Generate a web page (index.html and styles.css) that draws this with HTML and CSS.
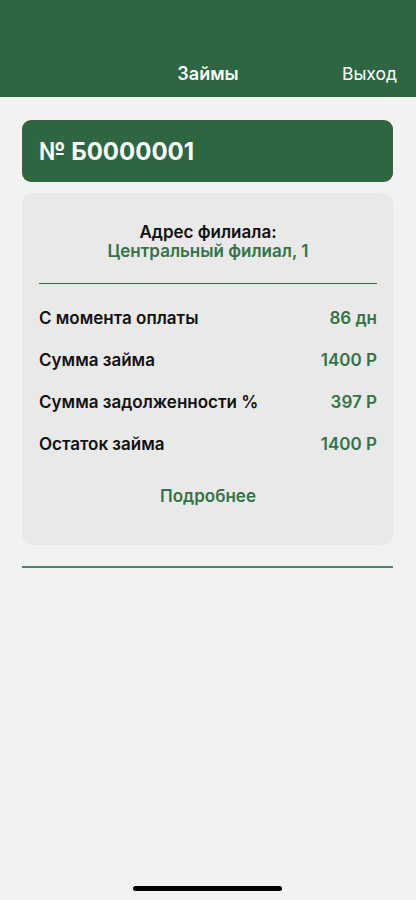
FILE: index.html
```html
<!DOCTYPE html>
<html lang="ru">
<head>
    <meta charset="UTF-8">
    <meta name="viewport" content="width=device-width, initial-scale=1.0">
    <title>Займы</title>
    <link rel="stylesheet" href="styles.css">
</head>
<body>
    <div class="header">
        <div class="header-side"></div>
        <h1>Займы</h1>
        <div class="header-side header-right">Выход</div>
    </div>

    <div class="content">
        <div class="loan-number">№ Б0000001</div>

        <div class="loan-card">
            <div class="branch">
                <p class="branch-label">Адрес филиала:</p>
                <p class="branch-name">Центральный филиал, 1</p>
            </div>
            <div class="divider"></div>
            <div class="rows">
                <div class="row"><span>С момента оплаты</span><span class="value">86 дн</span></div>
                <div class="row"><span>Сумма займа</span><span class="value">1400 Р</span></div>
                <div class="row"><span>Сумма задолженности %</span><span class="value">397 Р</span></div>
                <div class="row"><span>Остаток займа</span><span class="value">1400 Р</span></div>
            </div>
            <div class="more">Подробнее</div>
        </div>

        <div class="bottom-line"></div>
    </div>

    <div class="home-indicator"></div>
</body>
</html>
```

FILE: styles.css
```css
body {
    font-family: Inter, "Noto Sans", sans-serif;
    margin: 0;
    padding: 0;
    background: #f2f2f2;
    color: #111;
    width: 416px;
    height: 900px;
    display: flex;
    flex-direction: column;
    position: relative;
    overflow: hidden;
}
.header {
    background: #2d6640;
    height: 97px;
    box-sizing: border-box;
    padding: 0 19px 11px 19px;
    display: flex;
    align-items: flex-end;
    justify-content: space-between;
    color: #fff;
}
.header h1 {
    margin: 0;
    font-size: 18px;
    font-weight: 600;
    line-height: 24px;
}
.header-side {
    width: 80px;
    font-size: 17.5px;
    line-height: 24px;
}
.header-right {
    text-align: right;
}
.content {
    padding: 23px 23px 0 22px;
}
.loan-number {
    background: #2d6640;
    color: #fff;
    border-radius: 9px;
    height: 62px;
    display: flex;
    align-items: center;
    padding-left: 17px;
    font-size: 24px;
    font-weight: 700;
}
.loan-card {
    margin-top: 11px;
    background: #e9e9e9;
    border-radius: 10px;
    padding: 30px 16px 39px 17px;
}
.branch {
    text-align: center;
}
.branch p {
    margin: 0;
    font-size: 17px;
    line-height: 19px;
    font-weight: 600;
}
.branch-name {
    color: #357347;
}
.divider {
    height: 1px;
    background: #2f6e44;
    margin: 22px 0 0 0;
}
.rows {
    padding-top: 13px;
}
.row {
    display: flex;
    justify-content: space-between;
    height: 42px;
    align-items: center;
    font-size: 17px;
    font-weight: 600;
}
.row .value {
    color: #357347;
}
.more {
    text-align: center;
    margin-top: 21px;
    font-size: 17px;
    font-weight: 600;
    color: #357347;
}
.bottom-line {
    height: 2px;
    background: #4f8560;
    margin-top: 21px;
}
.home-indicator {
    position: absolute;
    left: 133px;
    bottom: 9px;
    width: 149px;
    height: 5px;
    border-radius: 3px;
    background: #000;
}
```
